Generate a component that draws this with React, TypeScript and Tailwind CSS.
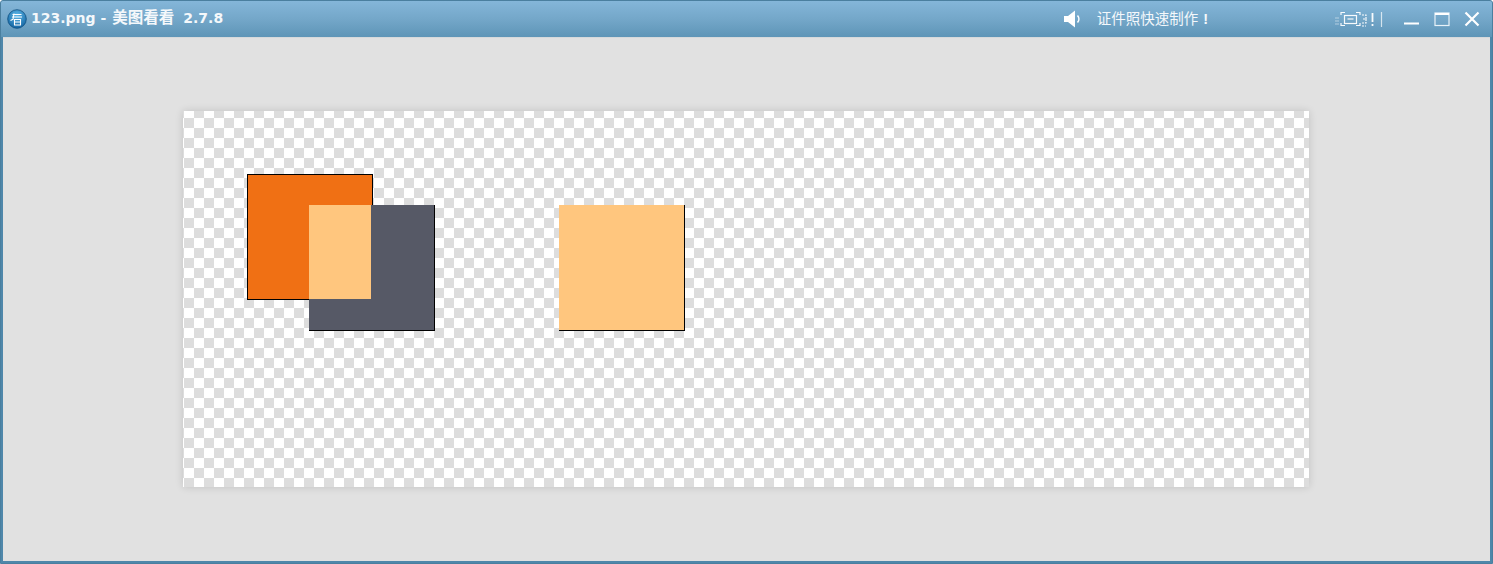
export default function App() {
  return (
    <div className="w-[1493px] h-[564px] flex flex-col overflow-hidden bg-[#4f87aa] border border-[#4a7f9f] rounded-t-[3px] font-['Liberation_Sans','Noto_Sans_CJK_SC',sans-serif]">
      <div className="h-[36px] shrink-0 flex items-center pl-[6px] pr-[12px] text-white bg-gradient-to-b from-[#84b6d9] via-[#74a7c9] to-[#5e95b7]">
        <svg width="20" height="20" viewBox="0 0 20 20" className="shrink-0">
          <defs>
            <radialGradient id="g" cx="50%" cy="30%" r="75%">
              <stop offset="0%" stopColor="#5fb8e8" />
              <stop offset="100%" stopColor="#0d5f9e" />
            </radialGradient>
          </defs>
          <circle cx="10" cy="10" r="9.3" fill="url(#g)" stroke="#0f4f80" strokeWidth="0.8" />
          <path d="M5.5 5.5h9M5 8h10M7 4.5 6 10.5M7.5 10.5h6v5.5h-6zM7.5 13h6M3.5 11.5l3-1.5" stroke="#fff" strokeWidth="1.1" fill="none" />
        </svg>
        <span className="ml-[4px] text-[14px] font-bold font-['DejaVu_Sans','Noto_Sans_CJK_SC',sans-serif] whitespace-nowrap leading-none text-[#f4f8fb]">
          123.png -<span className="ml-[6px] text-[15.5px]">美图看看</span><span className="ml-[9px]">2.7.8</span>
        </span>
        <div className="flex-1" />
        <svg width="18" height="20" viewBox="0 0 18 20" className="shrink-0">
          <path d="M0 7h4l7-5.5v17L4 13H0z" fill="#fff" />
          <path d="M13.5 6.5c1.8 2 1.8 5 0 7" stroke="#fff" strokeWidth="1.6" fill="none" />
        </svg>
        <span className="ml-[15px] text-[14.5px] leading-none whitespace-nowrap text-[#f4f8fb]">
          证件照快速制作<span className="ml-[5px] font-bold">!</span>
        </span>
        <svg width="48" height="20" viewBox="0 0 48 20" className="ml-[127px] shrink-0">
          <g stroke="#fff" strokeWidth="1.2" fill="none" opacity="0.95">
            <path d="M0.5 9h4M0.5 12h4M0.5 15h4" strokeDasharray="1 1" />
            <path d="M6 6V3.5h4M21 3.5h4V6M6 14v2.5h4M21 16.5h4V14" />
            <rect x="9.5" y="6.5" width="12" height="8" />
            <path d="M12.5 10h6" />
            <path d="M27 6h4v4h-4M27 14h4v-4M27 17h4" strokeDasharray="2 1" />
            <path d="M37.5 4v9M37.5 15v2" strokeWidth="1.8" />
            <path d="M46.5 3v15" opacity="0.75" />
          </g>
        </svg>
        <svg width="16" height="16" viewBox="0 0 16 16" className="ml-[21px] shrink-0">
          <path d="M0 12.5h15" stroke="#fff" strokeWidth="2.2" />
        </svg>
        <svg width="16" height="16" viewBox="0 0 16 16" className="ml-[14px] shrink-0">
          <rect x="1" y="2" width="14" height="12.5" stroke="#e8f2f8" strokeWidth="1.2" fill="none" />
          <path d="M1 3h14" stroke="#fff" strokeWidth="2.2" />
        </svg>
        <svg width="16" height="16" viewBox="0 0 16 16" className="ml-[14px] shrink-0">
          <path d="M1.5 1.5l13 13M14.5 1.5l-13 13" stroke="#fff" strokeWidth="2.2" />
        </svg>
      </div>
      <div className="flex-1 mx-[2px] mb-[2px] pr-[2px] pb-[2px] flex items-center justify-center bg-[#e1e1e1] border-t border-[#d6d9db]">
        <div className="relative w-[1126px] h-[376px] shrink-0 bg-[repeating-conic-gradient(#fff_0_25%,#dddddd_0_50%)] bg-[length:20px_20px] bg-[position:1px_7px] shadow-[0_0_8px_rgba(0,0,0,0.14)]">
          <div className="absolute left-[64px] top-[63px] w-[126px] h-[126px] bg-[#f07014] border border-black" />
          <div className="absolute left-[126px] top-[94px] w-[126px] h-[126px] bg-[#565966] border-r border-b border-black" />
          <div className="absolute left-[126px] top-[94px] w-[62px] h-[94px] bg-[#ffc67e]" />
          <div className="absolute left-[376px] top-[94px] w-[126px] h-[126px] bg-[#ffc67e] border-r border-b border-black" />
        </div>
      </div>
    </div>
  );
}
